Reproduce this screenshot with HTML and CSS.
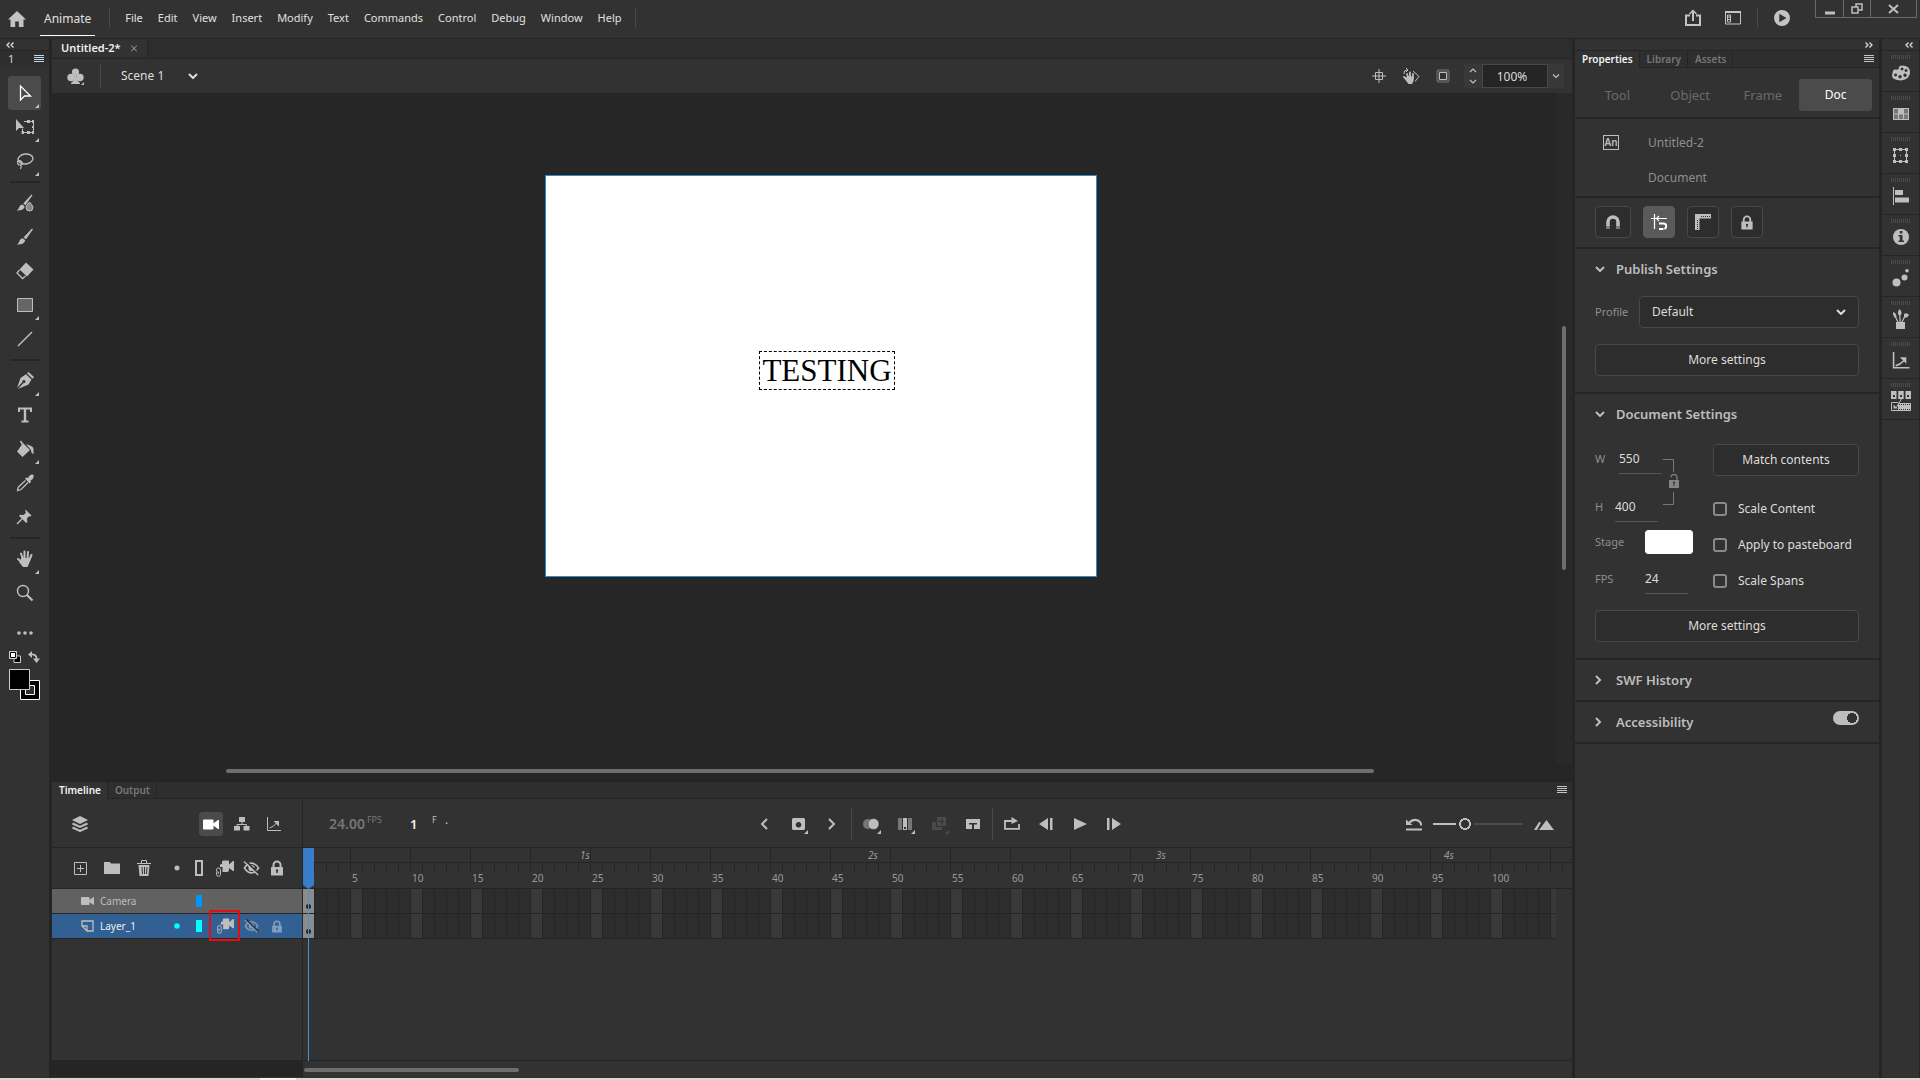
FILE: index.html
```html
<!DOCTYPE html>
<html lang="en">
<head>
  <meta charset="UTF-8">
  <meta name="viewport" content="width=device-width, initial-scale=1.0">
  <title>Animate</title>
  <link rel="stylesheet" href="styles.css">
</head>
<body>

  <!-- Shared icons -->
  <svg class="sprite" aria-hidden="true">
    <symbol id="lines" viewBox="0 0 10 8"><path d="M0 .5h10M0 2.5h10M0 4.5h10M0 6.5h10" stroke="currentColor"/></symbol>
    <symbol id="lock" viewBox="0 0 12 16"><path fill-rule="evenodd" fill="currentColor" d="M0 7h1.500V5a4.500 4.500 0 0 1 9 0v2H12v8.500H0zM3.500 7h5V5a2.500 2.500 0 0 0-5 0zM6 9.200a1.300 1.300 0 0 0-.7 2.300V13h1.400v-1.500A1.300 1.300 0 0 0 6 9.200z"/></symbol>
    <symbol id="camera" viewBox="0 0 16 10"><path fill="currentColor" d="M1 0h8.500q1 0 1 1v2.800L15 .5h1v9h-1l-4.500-3.300V9q0 1-1 1H1Q0 10 0 9V1q0-1 1-1z"/></symbol>
    <symbol id="attach" viewBox="0 0 18 17"><path fill="currentColor" d="M6 2q0-1.500 1.500-1.500H12q1 0 1 1v3L17 1h1v10h-1l-4-3v2q0 2-2 2H6.500V7H4V5q0-1 2-1z"/><path fill="none" stroke="currentColor" d="M.5 11.500V10q0-2 2-2t2 2v4.500q0 1.800-2 1.800t-2-1.800V13q0-1.200 1.200-1.200h.6V14"/></symbol>
    <symbol id="eye" viewBox="0 0 18 16"><path fill="none" stroke="currentColor" stroke-width="1.700" d="M1.500 8Q5 2.800 9 2.800T16.500 8Q13 13.200 9 13.200T1.500 8z"/><circle cx="9" cy="8" r="3.300" fill="currentColor"/><path class="slash" d="M2.500 0l15 15"/><path stroke="currentColor" stroke-width="1.500" d="M1 1l15 14.500"/></symbol>
    <symbol id="down" viewBox="0 0 10 6"><path fill="none" stroke="currentColor" stroke-width="2" d="M1 1l4 4 4-4"/></symbol>
    <symbol id="right" viewBox="0 0 6 10" preserveAspectRatio="xMinYMid"><path fill="none" stroke="currentColor" stroke-width="2" d="M1 1l4 4-4 4"/></symbol>
    <symbol id="graph" viewBox="0 0 16 16"><path fill="none" stroke="currentColor" d="M1.500 1v13.500H15M3.500 12q4-1 7.500-5.500"/><path fill="currentColor" d="M7.500 5H13v5.500L11.200 9 10 7.500z"/></symbol>
  </svg>

  <header class="topbar">
    <button class="icon-btn home" aria-label="Home"><svg width="18" height="16" viewBox="0 0 18 16"><path fill="currentColor" d="M9 0l9 8.500h-2.500V16h-4.700v-5.500H7.200V16H2.500V8.500H0z"/></svg></button>
    <button class="app-name">Animate</button>
    <nav class="menu">
      <a href="#">File</a><a href="#">Edit</a><a href="#">View</a><a href="#">Insert</a><a href="#">Modify</a><a href="#">Text</a><a href="#">Commands</a><a href="#">Control</a><a href="#">Debug</a><a href="#">Window</a><a href="#">Help</a>
    </nav>
    <div class="top-actions">
      <button class="icon-btn" aria-label="Share"><svg width="16" height="18" viewBox="0 0 16 18"><path fill="none" stroke="currentColor" stroke-width="2" d="M5 6.500H1V16h14V6.500h-4M8 12V2"/><path fill="none" stroke="currentColor" stroke-width="1.500" d="M4.500 5L8 1.500 11.500 5"/></svg></button>
      <button class="icon-btn" aria-label="Workspace"><svg width="16" height="14" viewBox="0 0 16 14"><path fill="none" stroke="currentColor" d="M.5 1h15v12H.5z"/><path stroke="currentColor" stroke-width="2" d="M0 1h16"/><path fill="none" stroke="currentColor" d="M2.500 4h3v7h-3zM3 6h2M3 8.500h2"/></svg></button>
      <button class="icon-btn play" aria-label="Test movie"><svg width="16" height="16" viewBox="0 0 16 16"><path fill-rule="evenodd" fill="currentColor" d="M8 0a8 8 0 1 1 0 16A8 8 0 0 1 8 0zM5.300 3.800v8.400L12.500 8z"/></svg></button>
    </div>
    <div class="window-buttons">
      <button aria-label="Minimize"><svg width="10" height="12"><path d="M0 10h10" stroke="currentColor" stroke-width="3"/></svg></button>
      <button aria-label="Restore"><svg width="12" height="11"><path fill="none" stroke="currentColor" stroke-width="1.500" d="M1 4h6v6H1zM5 4V1h6v6H7"/></svg></button>
      <button aria-label="Close"><svg width="11" height="10"><path fill="none" stroke="currentColor" stroke-width="2" d="M1 1l9 8M10 1L1 9"/></svg></button>
    </div>
  </header>

  <main class="workspace">

    <aside class="tools">
      <div class="strip"><svg width="8" height="6" viewBox="0 0 8 6"><path fill="none" stroke="currentColor" stroke-width="1.300" d="M3.500.5L1 3l2.500 2.500M7.500.5L5 3l2.500 2.500"/></svg></div>
      <div class="tools-head"><span>1</span><button class="icon-btn" aria-label="Tools menu"><svg width="10" height="8"><use href="#lines"/></svg></button></div>
      <div class="tool-list">
        <button class="tool more active" aria-label="Selection"><svg viewBox="0 0 18 18"><path fill="none" stroke="#fff" stroke-width="1.300" d="M4.500 2v14l4-4h6z"/></svg></button>
        <button class="tool more" aria-label="Free transform"><svg viewBox="0 0 18 18"><path fill="currentColor" d="M0 1v12l3-3h5z"/><path fill="none" stroke="currentColor" d="M8 3.500h9.500v11h-11v-4"/><path fill="currentColor" d="M11 2h3v3h-3zM16 2h2v3h-2zM16 8h2v2h-2zM16 13h2v3h-2zM11 13h3v3h-3zM5.500 13H8v3H5.500z"/></svg></button>
        <button class="tool more" aria-label="Lasso"><svg viewBox="0 0 18 18"><ellipse cx="9.500" cy="7" rx="7.500" ry="5" transform="rotate(-8 9.500 7)" fill="none" stroke="currentColor" stroke-width="1.400"/><path fill="none" stroke="currentColor" stroke-width="1.200" d="M1.500 10.500q0-2 2-2t3 3q-1 2-3 1.500t-2-2.500zM3 9.500q3 0 4 2M4 13q2 1 .5 4"/></svg></button>
        <hr>
        <button class="tool" aria-label="Fluid brush"><svg viewBox="0 0 18 18"><path fill="currentColor" d="M15.500.5l1 .8-7 10-2.200-1.700zM6.500 10.500l2.200 1.800q-.5 4.500-8 4.200 2-1 2.500-3.500 1-2.500 3.300-2.500z"/><path fill="#8a8a8a" stroke="currentColor" d="M13.500 8q3.500 3.500 3.500 5.500a3.500 3.500 0 0 1-7 0Q10 11.500 13.500 8z"/></svg></button>
        <button class="tool" aria-label="Brush"><svg viewBox="0 0 18 18"><path fill="currentColor" d="M16 .5l1 .8-7 10-2.500-1.900zM6.700 10.300l2.500 2q-.7 4.500-8.200 4.200 2-1 2.400-3.500 1-2.500 3.300-2.700z"/></svg></button>
        <button class="tool" aria-label="Eraser"><svg viewBox="0 0 18 18"><path fill="currentColor" d="M10 .5l7.500 7-6.500 7-7.500-7z"/><path fill="none" stroke="currentColor" stroke-width="1.300" d="M3.500 8L1 11l5.500 5.500L9.500 14"/></svg></button>
        <button class="tool more" aria-label="Rectangle"><svg viewBox="0 0 18 18"><path fill="#666" stroke="currentColor" d="M1.500 2.500h15v13h-15z"/></svg></button>
        <button class="tool" aria-label="Line"><svg viewBox="0 0 18 18"><path stroke="currentColor" stroke-width="1.500" d="M2 16L16 2"/></svg></button>
        <hr>
        <button class="tool more" aria-label="Pen"><svg viewBox="0 0 18 18"><path fill="currentColor" d="M11 1.200L12.500 0 18 5l-1.500 1.800zM10 2.200l5.500 5.300-3 5L2 17l5.500-6a1.500 1.500 0 1 0-1-1L1 16 4.500 6z"/></svg></button>
        <button class="tool" aria-label="Text"><svg viewBox="0 0 18 18"><path fill="currentColor" d="M2 1.500h14V6h-2V3.500h-3.800v11h2.300v2h-7v-2h2.300v-11H4V6H2z"/></svg></button>
        <button class="tool more" aria-label="Paint bucket"><svg viewBox="0 0 18 18"><path fill="currentColor" d="M7 3l7 7-7.500 7L1 11.500zM10 4l4 1.500q3.500 1 3.500 4V14q-2.500-.5-2.500-4z"/><path fill="none" stroke="currentColor" stroke-width="1.500" d="M4.500 1l3 5"/></svg></button>
        <button class="tool" aria-label="Eyedropper"><svg viewBox="0 0 18 18"><path fill="currentColor" d="M9 4.500l1.500-1L12 4q1.500-3.500 4-3.500T17.500 3q0 2-3 3.500l.5 1.500-1.500 1.500z"/><path fill="none" stroke="currentColor" stroke-width="1.300" d="M9.500 6.500L3 12.500q-1.500 2-1.500 4 2.500-.3 4-1.500l6.500-6.500"/></svg></button>
        <button class="tool" aria-label="Asset warp"><svg viewBox="0 0 18 18"><path fill="currentColor" d="M9.500 1.500l6 6-1 1-1.500-.3-2 2.300.3 3.500-1.200 1-7-7 1-1.200 3.400.2 2.300-2-.5-2z"/><path stroke="currentColor" stroke-width="1.500" d="M6 11l-5 5"/></svg></button>
        <hr>
        <button class="tool more" aria-label="Hand"><svg viewBox="0 0 18 18"><path fill="none" stroke="currentColor" stroke-width="2" stroke-linecap="round" d="M5 3.500l2 6M8.500 1.500v8M12 2l-.5 8M15.500 5l-2.500 6M2 9l3.500 3"/><path fill="currentColor" d="M5.500 8H14q0 5-2.500 9H7l-4-5z"/></svg></button>
        <button class="tool" aria-label="Zoom"><svg viewBox="0 0 18 18"><circle cx="7" cy="7" r="5.500" fill="none" stroke="currentColor" stroke-width="1.400"/><path stroke="currentColor" stroke-width="2.200" d="M11 11l5.500 5.500"/></svg></button>
        <button class="tool dots" aria-label="Edit toolbar"><svg viewBox="0 0 18 18"><circle cx="3" cy="9" r="1.800" fill="currentColor"/><circle cx="9" cy="9" r="1.800" fill="currentColor"/><circle cx="15" cy="9" r="1.800" fill="currentColor"/></svg></button>
      </div>
      <div class="swatch-actions">
        <button class="icon-btn" aria-label="Default colors"><svg width="12" height="12" viewBox="0 0 12 12"><path fill="#000" stroke="#ccc" d="M5 5h6.500v6.500H5z"/><path fill="#fff" stroke="#ccc" d="M.5.5h7v7h-7z"/><path fill="none" stroke="#000" d="M1.500 1.500h5v5h-5z"/></svg></button>
        <button class="icon-btn" aria-label="Swap colors"><svg width="12" height="12" viewBox="0 0 12 12"><path fill="none" stroke="currentColor" stroke-width="1.800" d="M3 3.500q6-.5 5.500 5"/><path fill="currentColor" d="M4 0v7L0 3.500zM5 7.500h7L8.500 12z"/></svg></button>
      </div>
      <button class="icon-btn swatches" aria-label="Fill and stroke"><svg width="32" height="32" viewBox="0 0 32 32"><path fill="none" stroke="#000" stroke-width="6" d="M14 14h14v14H14z"/><path fill="none" stroke="#fff" d="M11.500 11.500h19v19h-19zM16.500 16.500h9v9h-9z"/><path stroke="#ccc" fill="#000" d="M.5.500h20v20H.5z"/></svg></button>
    </aside>

    <section class="center">
      <div class="doc-tabs"><button class="doc-tab">Untitled-2*<svg width="6" height="7"><path d="M0 .5l6 6M6 .5l-6 6" stroke="currentColor"/></svg></button></div>

      <div class="scene-bar">
        <button class="icon-btn club" aria-label="Edit symbols"><svg width="18" height="17" viewBox="0 0 18 17"><circle cx="8.500" cy="4" r="3.600" fill="currentColor"/><circle cx="4" cy="9.500" r="3.700" fill="currentColor"/><circle cx="13" cy="9.500" r="3.700" fill="currentColor"/><path fill="currentColor" d="M7.500 6h2q0 7 3.500 9v1H4v-1q3.500-2 3.500-9zM17 14v3h-3z"/></svg></button>
        <button class="scene-name">Scene 1<svg width="10" height="6"><use href="#down"/></svg></button>
        <div class="view-tools">
          <button class="icon-btn" aria-label="Center stage"><svg width="14" height="14" viewBox="0 0 14 14"><path fill="none" stroke="currentColor" d="M3.500 3.500h7v7h-7zM7 0v14M0 7h14"/></svg></button>
          <button class="icon-btn" aria-label="Rotate stage"><svg width="18" height="16" viewBox="0 0 18 16"><path fill="none" stroke="currentColor" stroke-width="1.800" stroke-linecap="round" d="M5 6l1.500 4M8 4.500v6M11 6l-.5 5M2 9l3 3"/><path fill="currentColor" d="M4.500 8.500h7.500q0 5-2 7.500H6.500l-3-4z"/><path fill="none" stroke="currentColor" d="M11 3l6 5.500-4 5M2 6q-.5-4 3-4M4 0l2 2-2 2"/></svg></button>
          <button class="icon-btn clip" aria-label="Clip content"><svg width="14" height="14" viewBox="0 0 14 14"><path fill="none" stroke="#777" stroke-width="3" stroke-dasharray="1 1" d="M1.500 1.500h11v11h-11z"/><path fill="none" stroke="currentColor" d="M3.500 3.500h7v7h-7z"/></svg></button>
        </div>
        <div class="zoom-box">
          <svg width="8" height="16" viewBox="0 0 8 16"><path fill="none" stroke="currentColor" stroke-width="1.200" d="M1 4l3-3 3 3M1 12l3 3 3-3"/></svg>
          <input type="text" value="100%" aria-label="Zoom">
          <button class="icon-btn" aria-label="Zoom levels"><svg width="8" height="5" viewBox="0 0 8 5"><path fill="none" stroke="currentColor" stroke-width="1.200" d="M1 .5l3 3 3-3"/></svg></button>
        </div>
      </div>

      <div class="pasteboard">
        <div class="stage"><span class="stage-text">TESTING</span></div>
        <div class="vscroll"><div class="thumb"></div></div>
        <div class="hscroll"></div>
      </div>

      <div class="timeline">
        <div class="panel-tabs"><button class="tab active">Timeline</button><button class="tab">Output</button><button class="icon-btn panel-menu" aria-label="Timeline menu"><svg width="10" height="8"><use href="#lines"/></svg></button></div>

        <div class="timeline-controls">
          <div class="layer-tools">
            <button class="icon-btn" aria-label="Layer view"><svg width="16" height="16" viewBox="0 0 16 16"><path fill="currentColor" d="M8 0l8 4-8 4-8-4z"/><path fill="none" stroke="currentColor" stroke-width="2" d="M.5 7.500L8 11l7.500-3.500M.5 11.500L8 15l7.500-3.500"/></svg></button>
            <button class="icon-btn cam-toggle" aria-label="Camera"><svg width="16" height="11"><use href="#camera"/></svg></button>
            <button class="icon-btn" aria-label="Layer parenting"><svg width="16" height="14" viewBox="0 0 16 14"><path fill="currentColor" d="M5 0h6v5H5zM0 9h6v4.500H0zM9.500 9h6v4.500h-6z"/><path fill="none" stroke="currentColor" d="M8 5v2.500M3 9V7.500h9.500V9"/></svg></button>
            <button class="icon-btn" aria-label="Layer depth"><svg width="16" height="16"><use href="#graph"/></svg></button>
          </div>
          <div class="frame-info"><span class="fps">24.00<small>FPS</small></span><span class="cur">1</span><span class="unit">F</span><span class="tick">.</span></div>
          <div class="frame-tools">
            <button class="icon-btn" aria-label="Previous keyframe"><svg width="8" height="12"><path fill="none" stroke="currentColor" stroke-width="2" d="M7 1L2 6l5 5"/></svg></button>
            <button class="icon-btn sub" aria-label="Insert keyframe"><svg width="13" height="12"><path fill-rule="evenodd" fill="currentColor" d="M1 0h11l1 1v10l-1 1H1l-1-1V1zM6.500 4a2.800 2.800 0 1 0 .1 0z"/></svg></button>
            <button class="icon-btn" aria-label="Next keyframe"><svg width="8" height="12"><path fill="none" stroke="currentColor" stroke-width="2" d="M1 1l5 5-5 5"/></svg></button>
          </div>
          <div class="frame-tools">
            <button class="icon-btn sub" aria-label="Onion skin"><svg width="16" height="12" viewBox="0 0 16 12"><circle cx="5" cy="6" r="5" fill="#777"/><circle cx="10.500" cy="6" r="5.500" fill="currentColor" stroke="#323232" stroke-width=".5"/></svg></button>
            <button class="icon-btn sub" aria-label="Edit multiple frames"><svg width="14" height="12"><path fill="#777" d="M0 0h4v12H0zM10 0h4v12h-4z"/><path fill="currentColor" d="M5 0h4v12H5z"/><path fill="#323232" d="M6 9h2v2H6z"/></svg></button>
            <button class="icon-btn sub dim" aria-label="Create tween"><svg width="14" height="14"><path fill="currentColor" d="M0 5h4v5h6v3H0zM5 0h9v9H5z"/><path stroke="#323232" fill="none" d="M6 4.500h5M9 2l2.500 2.500L9 7"/></svg></button>
            <button class="icon-btn" aria-label="Insert frames"><svg width="14" height="12" viewBox="0 0 14 12"><path fill="currentColor" d="M0 1h14v10H8V6.500h3V5H3v1.500h3V11H0z"/></svg></button>
          </div>
          <div class="frame-tools">
            <button class="icon-btn" aria-label="Loop"><svg width="16" height="14" viewBox="0 0 16 14"><path fill="none" stroke="currentColor" stroke-width="1.800" d="M3 11.800H1V4h8M15 7v4.800H1"/><path fill="currentColor" d="M7.500 0L14 4 7.500 7z"/></svg></button>
            <button class="icon-btn" aria-label="Step back"><svg width="14" height="12"><path fill="currentColor" d="M9 0v12L0 6zM11 0h2.500v12H11z"/></svg></button>
            <button class="icon-btn" aria-label="Play"><svg width="13" height="12"><path fill="currentColor" d="M0 0l13 6-13 6z"/></svg></button>
            <button class="icon-btn" aria-label="Step forward"><svg width="14" height="12"><path fill="currentColor" d="M0 0h2.500v12H0zM5 0l9 6-9 6z"/></svg></button>
          </div>
          <div class="timeline-zoom">
            <button class="icon-btn" aria-label="Reset timeline zoom"><svg width="16" height="13" viewBox="0 0 16 13"><path fill="currentColor" d="M0 1.500L6.500 7H0z"/><path fill="none" stroke="currentColor" stroke-width="2" d="M3 5q4-4.500 9-2.500 3 1.500 3.500 5M0 11.500h16"/></svg></button>
            <input type="range" min="0" max="72" value="23" aria-label="Timeline zoom">
            <button class="icon-btn" aria-label="Zoom in timeline"><svg width="20" height="11" viewBox="0 0 20 11"><path fill="currentColor" d="M0 11L5 3l2 .5L3 11zM12.500 1L20 11H5z"/></svg></button>
          </div>
        </div>

        <div class="timeline-body">
          <div class="layers">
            <div class="layer layer-head">
              <button class="icon-btn" aria-label="New layer"><svg width="13" height="13"><path fill="none" stroke="currentColor" d="M.5.5h12v12H.5zM6.500 3v7M3 6.500h7"/></svg></button>
              <button class="icon-btn folder" aria-label="New folder"><svg width="16" height="12"><path fill="currentColor" d="M0 0h6l1 1.500h9V12H0z"/></svg></button>
              <button class="icon-btn" aria-label="Delete"><svg width="14" height="16"><path fill="currentColor" d="M1.500 5h11L11.500 16h-9z"/><path fill="none" stroke="currentColor" d="M0 3.500h14M4.500 3V.500h5V3"/><path stroke="#323232" d="M5 7l.5 7M7.500 7v7M10 7l-.5 7"/></svg></button>
              <span class="cell dot"><svg width="6" height="6"><circle cx="3" cy="3" r="2.500" fill="currentColor"/></svg></span>
              <span class="cell outline"><svg width="8" height="16"><path fill="none" stroke="currentColor" stroke-width="2" d="M1 1h6v14H1z"/></svg></span>
              <span class="cell"><svg width="18" height="17"><use href="#attach"/></svg></span>
              <span class="cell"><svg width="17" height="16"><use href="#eye"/></svg></span>
              <span class="cell"><svg width="12" height="16"><use href="#lock"/></svg></span>
            </div>
            <div class="layer camera-layer">
              <svg class="kind" width="13" height="10"><use href="#camera"/></svg>
              <span class="name">Camera</span>
              <span class="cell dot"></span>
              <span class="cell outline"><i class="chip blue"></i></span>
              <span class="cell"></span><span class="cell"></span><span class="cell"></span>
            </div>
            <div class="layer selected">
              <svg class="kind" width="13" height="12" viewBox="0 0 13 12"><path fill="none" stroke="currentColor" stroke-width="1.300" d="M1 6V1h11v10H6z"/><path fill="none" stroke="currentColor" stroke-width="1.300" d="M1 6h5v5"/></svg>
              <span class="name">Layer_1</span>
              <span class="cell dot cyan"><svg width="6" height="6"><circle cx="3" cy="3" r="2.800" fill="currentColor"/></svg></span>
              <span class="cell outline"><i class="chip"></i></span>
              <span class="cell marked"><svg width="17" height="16"><use href="#attach"/></svg></span>
              <span class="cell faint"><svg width="15" height="14"><use href="#eye"/></svg></span>
              <span class="cell faint"><svg width="10" height="13"><use href="#lock"/></svg></span>
            </div>
          </div>
          <div class="frames">
            <div class="seconds"><span>1s</span><span>2s</span><span>3s</span><span>4s</span></div>
            <div class="ruler"><span>5</span><span>10</span><span>15</span><span>20</span><span>25</span><span>30</span><span>35</span><span>40</span><span>45</span><span>50</span><span>55</span><span>60</span><span>65</span><span>70</span><span>75</span><span>80</span><span>85</span><span>90</span><span>95</span><span>100</span></div>
            <div class="frame-row"><i class="keyframe"></i></div>
            <div class="frame-row"><i class="keyframe"></i></div>
            <div class="playhead"></div>
          </div>
        </div>
        <div class="timeline-foot"><div class="foot-scroll"></div></div>
      </div>
    </section>

    <aside class="properties">
      <div class="strip end"><svg width="8" height="6" viewBox="0 0 8 6"><path fill="none" stroke="currentColor" stroke-width="1.300" d="M.5.5L3 3 .5 5.500M4.500.5L7 3 4.500 5.500"/></svg></div>
      <div class="panel-tabs"><button class="tab active">Properties</button><button class="tab">Library</button><button class="tab">Assets</button><button class="icon-btn panel-menu" aria-label="Properties menu"><svg width="10" height="8"><use href="#lines"/></svg></button></div>
      <div class="modes"><button>Tool</button><button>Object</button><button>Frame</button><button class="active">Doc</button></div>
      <div class="doc-info">
        <span class="an-icon">An</span>
        <div><p>Untitled-2</p><p>Document</p></div>
      </div>
      <div class="snap">
        <button class="wide" aria-label="Snap to objects"><svg width="14" height="15" viewBox="0 0 14 15"><path fill="none" stroke="currentColor" stroke-width="3.500" d="M2 11V7a5 5 0 0 1 10 0v4"/><path fill="#777" d="M0 11h4v3H0zM10 11h4v3h-4z"/></svg></button>
        <button class="active" aria-label="Snap align"><svg width="16" height="17" viewBox="0 0 16 17"><path fill="none" stroke="#fff" stroke-width="1.200" d="M0 4.500h16M3.500 0v15M8 2L5.500 4.500 8 7"/><path fill="none" stroke="#fff" stroke-width="2" d="M8 9.500h4.500a2.700 2.700 0 0 1 0 5.500H8" stroke-dasharray="12 1"/></svg></button>
        <button aria-label="Rulers"><svg width="16" height="16"><path fill="currentColor" d="M0 0h16v4.500H4.500V16H0z"/><path stroke="#2d2d2d" stroke-dasharray="1 1" d="M6 2.500h9M2.500 6v9"/></svg></button>
        <button aria-label="Lock guides"><svg width="12" height="15"><use href="#lock"/></svg></button>
      </div>

      <div class="section">
        <h2><svg width="10" height="6"><use href="#down"/></svg>Publish Settings</h2>
        <div class="profile"><label for="profile">Profile</label><div class="select"><select id="profile"><option>Default</option></select><svg width="10" height="6"><use href="#down"/></svg></div></div>
        <button class="btn">More settings</button>
      </div>

      <div class="section">
        <h2><svg width="10" height="6"><use href="#down"/></svg>Document Settings</h2>
        <div class="doc-settings">
          <div class="fields">
            <div class="size">
              <div>
                <div class="field"><label for="w">W</label><input type="text" id="w" value="550"></div>
                <div class="field height"><label for="h">H</label><input type="text" id="h" value="400"></div>
              </div>
              <svg width="17" height="48" viewBox="0 0 17 48"><path fill="none" stroke="#777" d="M0 1.500h10.500V14M10.500 34v12.500H0"/><path fill="#858585" fill-rule="evenodd" d="M6 22h10v8H6zM11 23.500a1 1 0 0 0-.5 1.900V28h1v-2.600a1 1 0 0 0-.5-1.900z"/><path fill="none" stroke="#777" stroke-width="1.300" d="M8 19.500q0-3 3-3t3 3V22"/></svg>
            </div>
            <div class="field stage-color"><label for="stageColor">Stage</label><input type="color" id="stageColor" value="#ffffff"></div>
            <div class="field fps-field"><label for="fps">FPS</label><input type="text" id="fps" value="24"></div>
          </div>
          <div class="options">
            <button class="btn">Match contents</button>
            <label><input type="checkbox">Scale Content</label>
            <label><input type="checkbox">Apply to pasteboard</label>
            <label><input type="checkbox">Scale Spans</label>
          </div>
        </div>
        <button class="btn">More settings</button>
      </div>

      <div class="section closed"><h2><svg width="10" height="10"><use href="#right"/></svg>SWF History</h2></div>
      <div class="section closed"><h2><svg width="10" height="10"><use href="#right"/></svg><label for="access">Accessibility</label></h2><input type="checkbox" class="switch" id="access" checked></div>
    </aside>

    <aside class="dock">
      <div class="strip end"><svg width="8" height="6" viewBox="0 0 8 6"><path fill="none" stroke="currentColor" stroke-width="1.300" d="M3.500.5L1 3l2.500 2.500M7.500.5L5 3l2.500 2.500"/></svg></div>
      <button aria-label="Color"><svg width="18" height="16" viewBox="0 0 18 16"><path fill-rule="evenodd" fill="currentColor" d="M1 6q0-2 3-1.500 2 .5 3-1Q6 .5 11 .5q7 .5 7 7T9 15.500Q0 15 0 10.500zM3.500 8.500a1.500 1.500 0 1 0 .1 0zM8 10a1.700 1.700 0 1 0 .1 0zM13 8.500a1.700 1.700 0 1 0 .1 0zM14 4a1.500 1.500 0 1 0 .1 0zM10 2.500a1.500 1.500 0 1 0 .1 0z"/></svg></button>
      <button aria-label="Swatches"><svg width="16" height="12"><path fill="currentColor" d="M0 0h16v12H0z"/><path fill="#777" d="M1 1h4v4.500H1zM11 1h4v4.500h-4zM1 6.500h4V11H1zM6 6.500h4V11H6zM11 6.500h4V11h-4z"/></svg></button>
      <button aria-label="Transform"><svg width="15" height="15"><path fill="none" stroke="currentColor" d="M1.500 1.500h12v12h-12z"/><path fill="currentColor" d="M0 0h3v3H0zM6 0h3v3H6zM12 0h3v3h-3zM0 6h3v3H0zM12 6h3v3h-3zM0 12h3v3H0zM6 12h3v3H6zM12 12h3v3h-3zM7 7h1v1H7z"/></svg></button>
      <button aria-label="Align"><svg width="16" height="18"><path fill="currentColor" d="M0 0h1v18H0zM2 3h8v5H2zM2 10.500h14v5H2z"/></svg></button>
      <button aria-label="Info"><svg width="16" height="16"><circle cx="8" cy="8" r="8" fill="currentColor"/><path fill="#323232" d="M6.800 2h2.600v2.500H6.800zM5.500 6h4v5.500H11V13H5.500v-1.500h1.300v-4H5.500z"/></svg></button>
      <button aria-label="Motion presets"><svg width="18" height="18"><circle cx="4.500" cy="13.500" r="4" fill="currentColor"/><circle cx="12.500" cy="8.500" r="3" fill="currentColor"/><circle cx="15" cy="1.800" r="1.800" fill="currentColor"/></svg></button>
      <button aria-label="Brush library"><svg width="16" height="20"><path fill="currentColor" d="M3 13h9v7H3zM6.500 0q3 2.500 1.500 6H5.500Q4 3 6.500 0zM0 3q3.500 1 3.500 5L2 9Q-.5 6 0 3zM11 5q3-2 5 1-2 4-5 2z"/><path fill="none" stroke="currentColor" stroke-width="1.300" d="M2.500 8L5 13M6.700 5l.5 8M12 7l-3 6"/></svg></button>
      <button aria-label="Motion editor"><svg width="18" height="17" viewBox="0 0 16 16"><path fill="none" stroke="currentColor" stroke-width="1.500" d="M1 0v14.800h15M3 13q4-1 8-5"/><path fill="currentColor" d="M7 5h6v6z"/></svg></button>
      <button aria-label="Frame picker"><svg width="20" height="20"><path fill="currentColor" d="M0 0h5.500v8H0zM7.200 0h5.500v8H7.200zM14.500 0H20v8h-5.500zM7 12h13v8H7z"/><path fill="none" stroke="currentColor" d="M7 11.500H.5v8H7M5 17l6-10"/><path fill="currentColor" d="M2.500 13.500l4 4h-4z"/><path stroke="#323232" stroke-dasharray="1 1" d="M8 13.500h11M8 18.500h11"/><path fill="#323232" d="M2 4h2v2H2zM9 4h2v2H9zM16 4h2v2h-2z"/></svg></button>
    </aside>

  </main>

  <footer class="taskbar"><div></div></footer>

</body>
</html>
```
FILE: styles.css
```css
* {
  box-sizing: border-box;
}

body {
  display: flex;
  flex-direction: column;
  height: 100vh;
  margin: 0;
  overflow: hidden;
  background-color: #252525;
  color: #bebebe;
  font: 12px/16px "Noto Sans", "Open Sans", sans-serif;
}

svg {
  display: block;
  flex: none;
}

.sprite {
  display: none;
}

button, input, select {
  margin: 0;
  padding: 0;
  border: none;
  border-radius: 0;
  background: none;
  color: inherit;
  font: inherit;
}

.icon-btn {
  display: flex;
  align-items: center;
  justify-content: center;
}

/* Top bar */
.topbar {
  display: flex;
  flex: none;
  height: 38px;
  margin-bottom: 1px;
  background-color: #323232;
  color: #e0e0e0;
}

.topbar .icon-btn {
  color: #c4c4c4;
}

.home {
  width: 34px;
}

.app-name {
  height: 36px;
  margin-left: 6px;
  padding: 2px 4px 0;
  border-bottom: 1px solid #fff;
}

.menu {
  display: flex;
  gap: 15px;
  height: 20px;
  margin: 8px 0 0 14px;
  padding: 2px 13px 0 15px;
  border-left: 1px solid #484848;
  border-right: 1px solid #484848;
  font-size: 11px;
}

.menu a {
  color: inherit;
  text-decoration: none;
}

.top-actions {
  display: flex;
  margin: 8px 9px 0 auto;
  height: 20px;
}

.top-actions button {
  width: 40px;
}

.top-actions .play {
  width: 49px;
  margin-left: 4px;
  border-left: 1px solid #484848;
}

.window-buttons {
  display: flex;
  height: 18px;
  margin-right: 3px;
  border: 1px solid #6a6a6a;
  border-top: none;
  color: #bebebe;
}

.window-buttons button {
  display: flex;
  align-items: center;
  justify-content: center;
  width: 27px;
}

.window-buttons button + button {
  border-left: 1px solid #6a6a6a;
}

.window-buttons button:last-child {
  width: 46px;
}

/* Workspace */
.workspace {
  display: grid;
  grid-template-columns: 49px minmax(0, 1fr) 304px 37px;
  gap: 3px;
  flex: 1;
  min-height: 0;
  margin-right: 1px;
}

.strip {
  display: flex;
  align-items: center;
  height: 12px;
  padding: 0 6px;
  border-bottom: 1px solid #252525;
  color: #ddd;
}

.strip.end {
  justify-content: flex-end;
}

/* Toolbar */
.tools {
  background-color: #323232;
}

.tools-head {
  display: flex;
  align-items: center;
  justify-content: space-between;
  height: 16px;
  padding: 0 5px 0 8px;
  background-color: #2e2e2e;
  color: #c0d8e8;
  font-size: 11px;
}

.tool-list {
  display: flex;
  flex-direction: column;
  align-items: center;
  margin-top: 9px;
}

.tool {
  display: flex;
  align-items: center;
  justify-content: center;
  position: relative;
  width: 33px;
  height: 34px;
  border-radius: 3px;
}

.tool svg {
  width: 18px;
  height: 18px;
}

.tool.active {
  background-color: #4b4b4b;
}

.tool.more::after, .sub::after {
  content: "";
  position: absolute;
  right: 2px;
  bottom: 2px;
  border: 2px solid;
  border-color: transparent currentColor currentColor transparent;
}

.tool-list hr {
  width: 30px;
  height: 2px;
  margin: 3px 0;
  border: none;
  background-color: #262626;
}

.tool.dots {
  margin-top: 6px;
}

.swatch-actions {
  display: flex;
  justify-content: space-between;
  padding: 1px 9px 0;
}

.swatches {
  margin: 6px 0 0 9px;
}

/* Document area */
.center {
  display: flex;
  flex-direction: column;
  min-height: 0;
}

.doc-tabs {
  flex: none;
  height: 20px;
  border-bottom: 1px solid #252525;
  background-color: #2d2d2d;
}

.doc-tab {
  display: flex;
  align-items: center;
  gap: 10px;
  height: 18px;
  padding: 0 10px 0 9px;
  border-right: 1px solid #252525;
  background-color: #323232;
  color: #f0f0f0;
  font-size: 11px;
  font-weight: 600;
}

.doc-tab svg {
  color: #aaa;
}

.scene-bar {
  display: flex;
  align-items: center;
  flex: none;
  height: 34px;
  padding-right: 8px;
  background-color: #323232;
}

.club {
  width: 49px;
  height: 24px;
  border-right: 1px solid #484848;
}

.scene-name {
  display: flex;
  align-items: center;
  gap: 24px;
  padding-left: 20px;
  color: #ddd;
}

.view-tools {
  display: flex;
  gap: 16px;
  margin: 0 14px 0 auto;
}

.zoom-box {
  display: flex;
  align-items: center;
  background-color: #383838;
}

.zoom-box > svg {
  margin: 0 5px;
}

.zoom-box input {
  width: 66px;
  height: 24px;
  padding-right: 6px;
  border: 1px solid #484848;
  background-color: #252525;
  color: #ddd;
  text-align: center;
}

.zoom-box button {
  width: 16px;
}

.pasteboard {
  display: grid;
  grid-template-columns: 1fr 16px;
  grid-template-rows: minmax(0, 1fr) 16px;
  flex: 1;
  min-height: 0;
  margin-bottom: 3px;
  background-color: #262626;
}

.stage {
  display: flex;
  align-items: flex-start;
  justify-content: center;
  align-self: start;
  justify-self: center;
  box-sizing: content-box;
  width: 550px;
  height: 225px;
  margin: 82px 0 0 34px;
  padding: 175px 0 0;
  border: 1px solid #2f8ad0;
  background-color: #fff;
}

.stage-text {
  margin-left: 12px;
  padding: 0 2px;
  border: 1px dashed #000;
  color: #000;
  font: 31px/37px "Liberation Serif", serif;
}

.vscroll {
  background-color: #292929;
}

.vscroll .thumb {
  width: 4px;
  height: 244px;
  margin: 233px auto 0;
  border-radius: 2px;
  background-color: #6e6e6e;
}

.hscroll {
  grid-column: 1 / 3;
  align-self: center;
  height: 4px;
  margin: 0 198px 0 174px;
  border-radius: 2px;
  background-color: #6e6e6e;
}

/* Timeline */
.timeline {
  display: flex;
  flex-direction: column;
  flex: none;
  height: 296px;
  background-color: #323232;
}

.panel-tabs {
  display: flex;
  flex: none;
  height: 17px;
  background-color: #2e2e2e;
  color: #777;
  font-size: 10px;
  font-weight: 600;
}

.tab {
  padding: 0 6px 0 7px;
  border-right: 1px solid #252525;
  border-bottom: 1px solid #252525;
}

.tab.active {
  border-bottom-color: transparent;
  background-color: #323232;
  color: #f4f4f4;
}

.panel-menu {
  flex: 1;
  justify-content: flex-end;
  padding-right: 5px;
  border-bottom: 1px solid #252525;
  color: #c4c4c4;
}

.timeline-controls {
  display: flex;
  align-items: center;
  flex: none;
  height: 49px;
  padding-top: 2px;
  border-bottom: 1px solid #252525;
}

.layer-tools {
  display: flex;
  align-items: center;
  gap: 11px;
  width: 251px;
  height: 48px;
  padding: 0 20px;
  border-right: 1px solid #252525;
}

.layer-tools .cam-toggle {
  width: 24px;
  height: 24px;
  margin-left: auto;
  border-radius: 4px;
  background-color: #4b4b4b;
  color: #fff;
}

.layer-tools button:nth-child(3) {
  margin-right: 5px;
}

.frame-info {
  display: flex;
  width: 442px;
  padding-left: 26px;
}

.fps {
  display: flex;
  width: 81px;
  color: #777;
  font-size: 14px;
  font-weight: 600;
}

.fps small {
  margin: -4px 0 0 2px;
  font-size: 9px;
  font-weight: 400;
}

.cur {
  width: 22px;
  color: #f0f0f0;
  font-size: 13px;
  font-weight: 600;
}

.unit {
  width: 13px;
  margin-top: -4px;
  font-size: 9px;
}

.tick {
  margin-top: -4px;
}

.frame-tools {
  display: flex;
  align-items: center;
  height: 32px;
  padding: 0 2px;
}

.frame-tools + .frame-tools {
  border-left: 1px solid #484848;
}

.frame-tools button {
  position: relative;
  width: 34px;
  height: 20px;
}

.frame-tools .sub::after {
  right: 7px;
  bottom: 0;
}

.frame-tools .dim {
  color: #4a4a4a;
}

.timeline-zoom {
  display: flex;
  align-items: center;
  gap: 11px;
  margin: 0 18px 0 auto;
}

.timeline-zoom input {
  appearance: none;
  width: 90px;
  height: 14px;
  background: linear-gradient(to right, #bebebe 23px, transparent 23px 41px, #4b4b4b 41px) center / 100% 2px no-repeat;
}

.timeline-zoom input::-webkit-slider-thumb {
  appearance: none;
  width: 18px;
  height: 12px;
  background: radial-gradient(circle at center, transparent 4px, #bebebe 4px 6px, transparent 6px);
}

.timeline-body {
  display: grid;
  grid-template-columns: 251px minmax(0, 1fr);
  flex: 1;
}

.layers {
  border-right: 1px solid #252525;
}

.layer {
  display: flex;
  align-items: center;
  height: 25px;
  padding-right: 12px;
  border-bottom: 1px solid #252525;
}

.layer-head {
  height: 41px;
  padding-left: 14px;
}

.layer-head .icon-btn {
  width: 28px;
}

.layer-head .folder {
  width: 36px;
}

.slash {
  stroke: #323232;
  stroke-width: 2;
}

.cell {
  display: flex;
  justify-content: center;
  width: 26px;
}

.cell.dot {
  width: 22px;
  margin-left: auto;
}

.cell.outline {
  width: 24px;
  padding-right: 2px;
}

.cell.cyan {
  color: #00ffff;
}

.cell.faint {
  color: #7f9dbd;
}

.cell.faint .slash {
  stroke: #336093;
}

.camera-layer {
  background-color: #616161;
}

.selected {
  background-color: #336093;
}

.selected .name {
  color: #eee;
}

.kind {
  margin: 0 6px 0 29px;
}

.layer .name {
  font-size: 10px;
}

.chip {
  width: 6px;
  height: 12px;
  background-color: #00ffff;
}

.chip.blue {
  background-color: #0096ff;
}

.marked {
  position: relative;
}

.marked::after {
  content: "";
  position: absolute;
  top: -8px;
  left: -3px;
  width: 27px;
  height: 27px;
  border: 2px solid #e01010;
}

.frames {
  position: relative;
  color: #9a9a9a;
  font-size: 10px;
}

/* one frame is 12px wide, every fifth one is marked */
.seconds {
  display: flex;
  height: 15px;
  padding-left: 277px;
  border-bottom: 1px solid #252525;
  background: repeating-linear-gradient(to right, transparent 0 47px, #252525 47px 48px, transparent 48px 60px);
  font-style: italic;
}

.seconds span {
  flex: none;
  width: 288px;
  line-height: 14px;
}

.seconds span:last-child {
  width: auto;
}

.ruler {
  display: flex;
  height: 26px;
  padding: 6px 0 0 49px;
  border-bottom: 1px solid #252525;
  background: repeating-linear-gradient(to right, transparent 0 11px, #252525 11px 12px) 0 0 / 100% 8px no-repeat;
  overflow: hidden;
}

.ruler span {
  flex: none;
  width: 60px;
  line-height: 18px;
}

.frame-row {
  height: 25px;
  margin-right: 16px;
  border-bottom: 1px solid #252525;
  background:
    repeating-linear-gradient(to right, transparent 0 11px, #252525 11px 12px),
    repeating-linear-gradient(to right, #2d2d2d 0 48px, #393939 48px 60px);
}

.keyframe {
  display: flex;
  align-items: flex-end;
  justify-content: center;
  width: 11px;
  height: 24px;
  padding-bottom: 4px;
  background-color: #8c8c8c;
}

.keyframe::after {
  content: "";
  width: 5px;
  height: 5px;
  border-radius: 50%;
  background-color: #252525;
}

.playhead {
  position: absolute;
  top: 0;
  bottom: 0;
  left: 0;
  width: 11px;
  background: linear-gradient(#4a90d9, #4a90d9) center / 1px 100% no-repeat;
}

.playhead::before {
  content: "";
  display: block;
  height: 41px;
  background-color: #397cc8;
  clip-path: polygon(0 0, 100% 0, 100% 37px, 50% 100%, 0 37px);
}

.timeline-foot {
  flex: none;
  height: 17px;
  margin-left: 250px;
  padding: 7px 0 0 1px;
  border-left: 1px solid #252525;
  box-shadow: -250px -1px #252525, 0 -1px #252525;
}

.foot-scroll {
  width: 215px;
  height: 4px;
  border-radius: 2px;
  background-color: #6e6e6e;
}

/* Properties */
.properties {
  background-color: #323232;
}

.modes {
  display: grid;
  grid-template-columns: repeat(4, 1fr);
  height: 51px;
  padding: 11px 7px 6px 6px;
  border-bottom: 2px solid #252525;
  color: #6a6a6a;
  font-size: 13px;
}

.modes .active {
  border-radius: 3px;
  background-color: #4b4b4b;
  color: #fff;
  font-size: 12px;
}

.doc-info {
  display: flex;
  height: 79px;
  padding: 16px 28px 0;
  border-bottom: 2px solid #252525;
  color: #8e8e8e;
}

.doc-info p {
  margin: 0 0 19px;
}

.an-icon {
  width: 16px;
  height: 15px;
  margin-right: 29px;
  border: 1px solid #bebebe;
  color: #bebebe;
  font-size: 10px;
  font-weight: 600;
  line-height: 13px;
  text-align: center;
}

.snap {
  display: flex;
  gap: 12px;
  height: 51px;
  padding: 8px 20px;
  border-bottom: 2px solid #252525;
}

.snap button {
  display: flex;
  align-items: center;
  justify-content: center;
  width: 32px;
  height: 32px;
  border: 1px solid #484848;
  border-radius: 4px;
  background-color: #2d2d2d;
}

.snap .wide {
  width: 36px;
}

.snap .active {
  border-color: #5a5a5a;
  background-color: #5a5a5a;
}

.section {
  padding: 11px 20px 16px;
  border-bottom: 2px solid #252525;
}

.section h2 {
  display: flex;
  align-items: center;
  gap: 11px;
  margin: 0;
  font-size: 13px;
  font-weight: 600;
  line-height: 18px;
}

.section.closed {
  display: flex;
  align-items: center;
  justify-content: space-between;
  height: 42px;
  padding: 0 20px;
}

.btn {
  display: block;
  width: 100%;
  height: 32px;
  border: 1px solid #484848;
  border-radius: 4px;
  background-color: #2d2d2d;
  color: #ddd;
  font-size: 12px;
}

.profile {
  display: flex;
  align-items: center;
  justify-content: space-between;
  margin: 18px 0 16px;
}

.profile label, .field label {
  color: #8e8e8e;
  font-size: 11px;
}

.select {
  display: flex;
  align-items: center;
  width: 220px;
  height: 32px;
  border: 1px solid #484848;
  border-radius: 4px;
  background-color: #2d2d2d;
  color: #ddd;
}

.select select {
  appearance: none;
  width: 100%;
  height: 100%;
  margin-right: -22px;
  padding: 0 12px;
}

.select svg {
  pointer-events: none;
}

.doc-settings {
  display: grid;
  grid-template-columns: 118px 1fr;
  margin: 21px 0 11px;
}

.size {
  display: flex;
  padding-bottom: 8px;
}

.size > svg {
  margin: 14px 0 0;
}

.field {
  display: flex;
  align-items: center;
  height: 30px;
}

.size > div {
  width: 68px;
}

.field input {
  width: 43px;
  height: 30px;
  border-bottom: 1px solid #555;
  color: #ddd;
  font-size: 12px;
}

.field label {
  width: 50px;
}

.size .field label {
  width: 24px;
}

.size .height {
  margin-top: 18px;
}

.size .height label {
  width: 20px;
}

.stage-color {
  height: 24px;
}

.stage-color input {
  width: 48px;
  height: 24px;
  border: none;
  border-radius: 4px;
  background-color: #fff;
}

.stage-color input::-webkit-color-swatch-wrapper {
  padding: 0;
}

.stage-color input::-webkit-color-swatch {
  border: none;
  border-radius: 4px;
}

.fps-field {
  margin-top: 10px;
}

.options .btn {
  margin-bottom: 15px;
}

.options label {
  display: flex;
  align-items: center;
  gap: 11px;
  height: 36px;
  color: #ddd;
  white-space: nowrap;
}

.options input {
  appearance: none;
  width: 14px;
  height: 14px;
  border: 2px solid #8a8a8a;
  border-radius: 3px;
}

.switch {
  appearance: none;
  width: 26px;
  height: 14px;
  margin-bottom: 8px;
  border-radius: 7px;
  background: radial-gradient(circle at 19px 7px, #323232 5px, #bebebe 5px);
}

/* Collapsed panels */
.dock {
  background-color: #323232;
}

.dock button {
  display: flex;
  align-items: center;
  justify-content: center;
  width: 100%;
  height: 41px;
  padding-top: 4px;
  border-bottom: 1px solid #252525;
  background: repeating-linear-gradient(to right, #4b4b4b 0 1px, transparent 1px 2px) center 4px / 20px 4px no-repeat;
}

.taskbar {
  flex: none;
  height: 2px;
  background-color: #d8d8d8;
}

.taskbar div {
  width: 36px;
  height: 2px;
  margin-left: 260px;
  background-color: #f6f6f6;
}
```
